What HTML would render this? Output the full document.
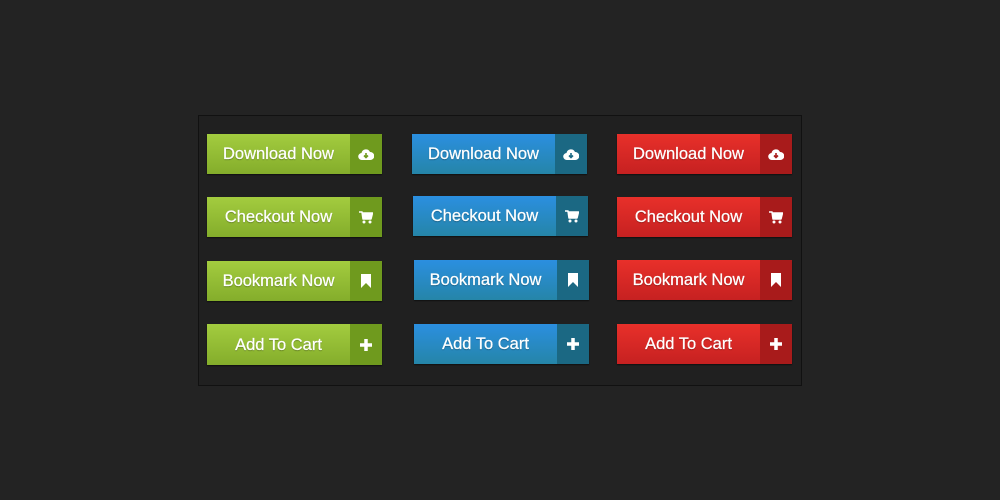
<!DOCTYPE html>
<html><head><style>
body{margin:0;width:1000px;height:500px;background:#232323;position:relative;overflow:hidden;font-family:"Liberation Sans",sans-serif}
.panel{position:absolute;left:198px;top:115px;width:604px;height:271px;background:#202020;border:1px solid #111;box-sizing:border-box}
.b{position:absolute;width:175px;height:40px;display:flex;box-shadow:0 1px 1px rgba(0,0,0,.5)}
.l{flex:1;color:#fff;font-size:16.5px;display:flex;align-items:center;justify-content:center;padding-top:1px;text-shadow:0 1px 1px rgba(0,0,0,.3);-webkit-text-stroke:0.25px #fff}
.i{width:32px;display:flex;align-items:center;justify-content:center}
.g .l{background:linear-gradient(#a3cc3f,#84ad2b)}.g .i{background:#6f9a1e}
.u .l{background:linear-gradient(#2b8fe0,#2585a8)}.u .i{background:#1b6883}
.r .l{background:linear-gradient(#e8302a,#c62121)}.r .i{background:#a81b1b}
svg{display:block}
</style></head><body>
<div class="panel"></div>
<div class="b g" style="left:207px;top:134px"><div class="l">Download Now</div><div class="i"><svg width="16" height="13" viewBox="0 0 16 13"><path d="M4 12a3.5 3.5 0 0 1-.5-7A4.5 4.5 0 0 1 12 4a3.5 3.5 0 0 1 .5 8z" fill="#fff"/><path d="M8 5v4M6 7.5l2 2 2-2" stroke="#6f9a1e" stroke-width="1.6" fill="none"/></svg></div></div>
<div class="b u" style="left:412px;top:134px"><div class="l">Download Now</div><div class="i"><svg width="16" height="13" viewBox="0 0 16 13"><path d="M4 12a3.5 3.5 0 0 1-.5-7A4.5 4.5 0 0 1 12 4a3.5 3.5 0 0 1 .5 8z" fill="#fff"/><path d="M8 5v4M6 7.5l2 2 2-2" stroke="#1b6883" stroke-width="1.6" fill="none"/></svg></div></div>
<div class="b r" style="left:617px;top:134px"><div class="l">Download Now</div><div class="i"><svg width="16" height="13" viewBox="0 0 16 13"><path d="M4 12a3.5 3.5 0 0 1-.5-7A4.5 4.5 0 0 1 12 4a3.5 3.5 0 0 1 .5 8z" fill="#fff"/><path d="M8 5v4M6 7.5l2 2 2-2" stroke="#a81b1b" stroke-width="1.6" fill="none"/></svg></div></div>

<div class="b g" style="left:207px;top:197px"><div class="l">Checkout Now</div><div class="i"><svg width="14" height="13" viewBox="0 0 14 13"><path d="M0 1h3l1 7h8l1.5-6H3.5" fill="#fff" stroke="#fff" stroke-width="1.5" stroke-linejoin="round"/><circle cx="5" cy="11" r="1.5" fill="#fff"/><circle cx="11" cy="11" r="1.5" fill="#fff"/></svg></div></div>
<div class="b u" style="left:413px;top:196px"><div class="l">Checkout Now</div><div class="i"><svg width="14" height="13" viewBox="0 0 14 13"><path d="M0 1h3l1 7h8l1.5-6H3.5" fill="#fff" stroke="#fff" stroke-width="1.5" stroke-linejoin="round"/><circle cx="5" cy="11" r="1.5" fill="#fff"/><circle cx="11" cy="11" r="1.5" fill="#fff"/></svg></div></div>
<div class="b r" style="left:617px;top:197px"><div class="l">Checkout Now</div><div class="i"><svg width="14" height="13" viewBox="0 0 14 13"><path d="M0 1h3l1 7h8l1.5-6H3.5" fill="#fff" stroke="#fff" stroke-width="1.5" stroke-linejoin="round"/><circle cx="5" cy="11" r="1.5" fill="#fff"/><circle cx="11" cy="11" r="1.5" fill="#fff"/></svg></div></div>

<div class="b g" style="left:207px;top:261px"><div class="l">Bookmark Now</div><div class="i"><svg width="10" height="14" viewBox="0 0 10 14"><path d="M0 0h10v14L5 9 0 14z" fill="#fff"/></svg></div></div>
<div class="b u" style="left:414px;top:260px"><div class="l">Bookmark Now</div><div class="i"><svg width="10" height="14" viewBox="0 0 10 14"><path d="M0 0h10v14L5 9 0 14z" fill="#fff"/></svg></div></div>
<div class="b r" style="left:617px;top:260px"><div class="l">Bookmark Now</div><div class="i"><svg width="10" height="14" viewBox="0 0 10 14"><path d="M0 0h10v14L5 9 0 14z" fill="#fff"/></svg></div></div>

<div class="b g" style="left:207px;top:324px;height:41px"><div class="l">Add To Cart</div><div class="i"><svg width="12" height="12" viewBox="0 0 12 12"><path d="M6 0v12M0 6h12" stroke="#fff" stroke-width="3.5"/></svg></div></div>
<div class="b u" style="left:414px;top:324px"><div class="l">Add To Cart</div><div class="i"><svg width="12" height="12" viewBox="0 0 12 12"><path d="M6 0v12M0 6h12" stroke="#fff" stroke-width="3.5"/></svg></div></div>
<div class="b r" style="left:617px;top:324px"><div class="l">Add To Cart</div><div class="i"><svg width="12" height="12" viewBox="0 0 12 12"><path d="M6 0v12M0 6h12" stroke="#fff" stroke-width="3.5"/></svg></div></div>
</body></html>
